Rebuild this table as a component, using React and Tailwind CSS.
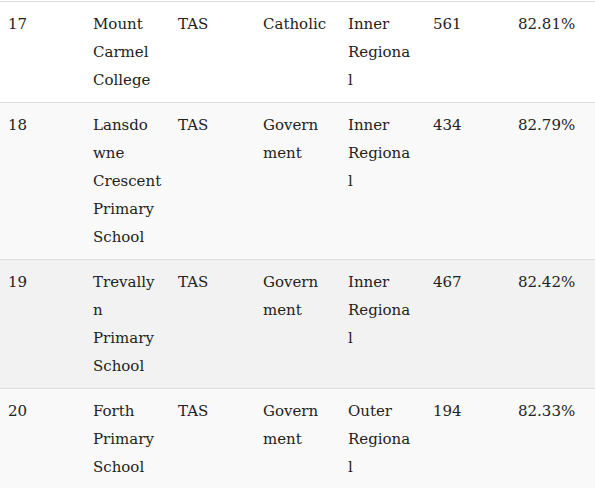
const rows = [
  {
    bg: 'bg-white',
    cells: [['17'], ['Mount', 'Carmel', 'College'], ['TAS'], ['Catholic'], ['Inner', 'Regiona', 'l'], ['561'], ['82.81%']],
  },
  {
    bg: 'bg-[#f9f9f9]',
    cells: [['18'], ['Lansdo', 'wne', 'Crescent', 'Primary', 'School'], ['TAS'], ['Govern', 'ment'], ['Inner', 'Regiona', 'l'], ['434'], ['82.79%']],
  },
  {
    bg: 'bg-[#f2f2f2]',
    cells: [['19'], ['Trevally', 'n', 'Primary', 'School'], ['TAS'], ['Govern', 'ment'], ['Inner', 'Regiona', 'l'], ['467'], ['82.42%']],
  },
  {
    bg: 'bg-[#f9f9f9]',
    cells: [['20'], ['Forth', 'Primary', 'School'], ['TAS'], ['Govern', 'ment'], ['Outer', 'Regiona', 'l'], ['194'], ['82.33%']],
  },
]

function App() {
  return (
    <div className="w-[595px] h-[488px] overflow-hidden bg-white pt-px">
      <table className="w-[595px] table-fixed border-collapse font-['DejaVu_Serif',serif] text-[15px] leading-[28px] text-[#222]">
        <tbody>
          {rows.map((row, i) => (
            <tr key={i} className={`${row.bg} border-t border-[#ddd]`}>
              {row.cells.map((lines, j) => (
                <td key={j} className="w-[85px] px-2 py-2 align-top whitespace-nowrap">
                  {lines.map((line, k) => (
                    <div key={k}>{line}</div>
                  ))}
                </td>
              ))}
            </tr>
          ))}
        </tbody>
      </table>
    </div>
  )
}

export default App
